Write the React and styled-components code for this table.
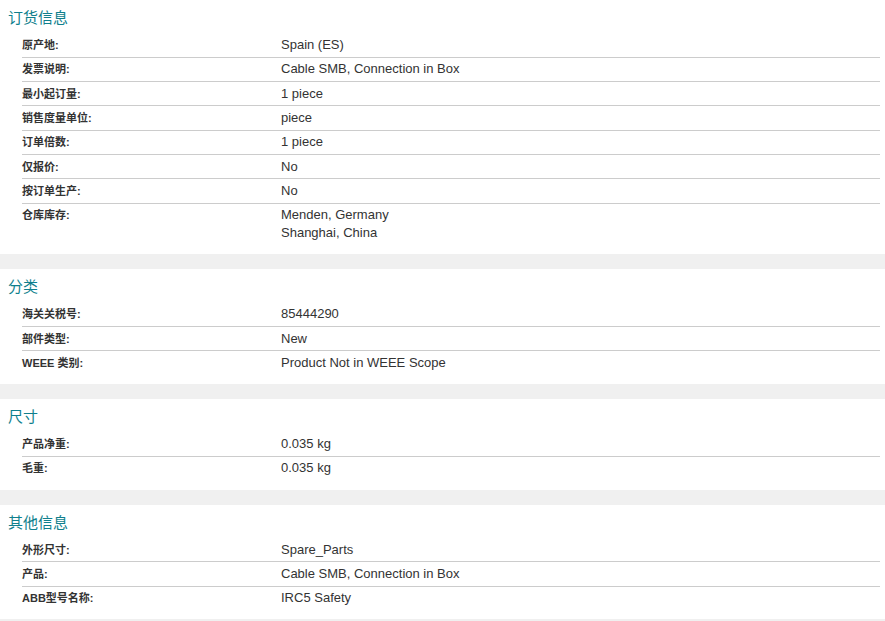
import React from "react";
import styled, { createGlobalStyle } from "styled-components";

const GlobalStyle = createGlobalStyle`
  html, body {
    margin: 0;
    padding: 0;
    background: #f0f0f0;
  }
  body {
    font-family: "Liberation Sans", Arial, "Noto Sans CJK SC", sans-serif;
    color: #333;
  }
`;

const Page = styled.div`
  display: flex;
  flex-direction: column;
  gap: 15px;
  width: 885px;
`;

const Section = styled.section`
  background: #fff;
  padding: 8px 0 9.5px 0;
`;

const Title = styled.h2`
  margin: 0 0 5.33px 8px;
  font-size: 15px;
  line-height: 20px;
  font-weight: normal;
  color: #0f7f8d;
  font-family: "Liberation Sans", "Noto Sans CJK SC", sans-serif;
`;

const Rows = styled.dl`
  margin: 0 5px 0 22px;
  padding: 0;
`;

const Row = styled.div`
  display: grid;
  grid-template-columns: 259px 1fr;
  padding: 2.67px 0;
  border-bottom: 1px solid #cccccc;
  &:last-child {
    border-bottom: none;
  }
`;

const Label = styled.dt`
  margin: 0;
  font-size: 11px;
  line-height: 18px;
  font-weight: bold;
  color: #333;
  font-family: "Liberation Sans", "Noto Sans CJK SC", sans-serif;
`;

const Value = styled.dd`
  margin: 0;
  font-size: 13px;
  line-height: 18px;
  color: #333;
  font-family: "Liberation Sans", "Noto Sans CJK SC", sans-serif;
`;

const Line = styled.div``;

const sections = [
  {
    title: "订货信息",
    rows: [
      ["原产地:", ["Spain (ES)"]],
      ["发票说明:", ["Cable SMB, Connection in Box"]],
      ["最小起订量:", ["1 piece"]],
      ["销售度量单位:", ["piece"]],
      ["订单倍数:", ["1 piece"]],
      ["仅报价:", ["No"]],
      ["按订单生产:", ["No"]],
      ["仓库库存:", ["Menden, Germany", "Shanghai, China"]],
    ],
  },
  {
    title: "分类",
    rows: [
      ["海关关税号:", ["85444290"]],
      ["部件类型:", ["New"]],
      ["WEEE 类别:", ["Product Not in WEEE Scope"]],
    ],
  },
  {
    title: "尺寸",
    rows: [
      ["产品净重:", ["0.035 kg"]],
      ["毛重:", ["0.035 kg"]],
    ],
  },
  {
    title: "其他信息",
    rows: [
      ["外形尺寸:", ["Spare_Parts"]],
      ["产品:", ["Cable SMB, Connection in Box"]],
      ["ABB型号名称:", ["IRC5 Safety"]],
    ],
  },
];

export default function App() {
  return (
    <>
      <GlobalStyle />
      <Page>
        {sections.map((s) => (
          <Section key={s.title}>
            <Title>{s.title}</Title>
            <Rows>
              {s.rows.map(([label, values]) => (
                <Row key={label}>
                  <Label>{label}</Label>
                  <Value>
                    {values.map((v) => (
                      <Line key={v}>{v}</Line>
                    ))}
                  </Value>
                </Row>
              ))}
            </Rows>
          </Section>
        ))}
      </Page>
    </>
  );
}
